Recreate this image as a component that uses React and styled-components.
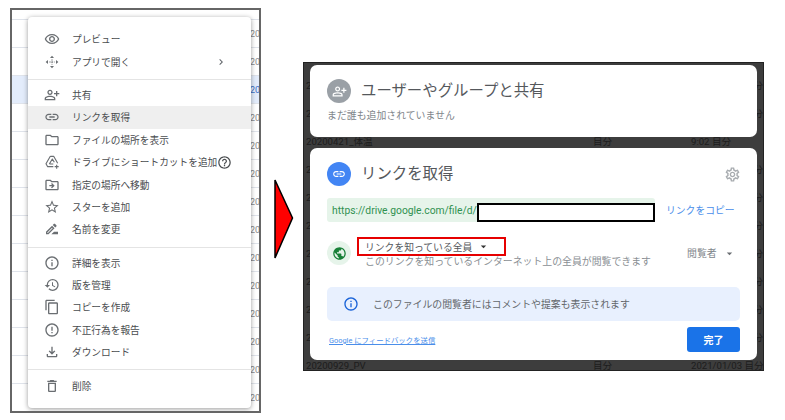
import styled, { createGlobalStyle } from "styled-components";
import {
  MdOutlineRemoveRedEye,
  MdOutlinePersonAddAlt,
  MdLink,
  MdOutlineFolder,
  MdHelpOutline,
  MdOutlineDriveFileMove,
  MdStarBorder,
  MdOutlineDriveFileRenameOutline,
  MdInfoOutline,
  MdHistory,
  MdContentCopy,
  MdErrorOutline,
  MdOutlineFileDownload,
  MdOutlineDelete,
  MdChevronRight,
  MdPublic,
  MdOutlineSettings,
  MdArrowDropDown,
} from "react-icons/md";

const GlobalStyle = createGlobalStyle`
  html, body {
    margin: 0;
    padding: 0;
    background: #fff;
  }
  body {
    font-family: Roboto, "Noto Sans CJK JP", sans-serif;
  }
`;

const Page = styled.div`
  display: flex;
  align-items: flex-start;
  width: 785px;
  height: 420px;
  padding: 8px 0 0 10px;
  box-sizing: border-box;
  overflow: hidden;
`;

/* left screenshot: file list with a context menu on top */
const ListFrame = styled.div`
  position: relative;
  width: 251px;
  height: 405px;
  box-sizing: border-box;
  border: 2px solid #666;
  overflow: hidden;
`;

const ListRow = styled.div`
  display: flex;
  align-items: center;
  height: ${(p) => (p.$short ? "10px" : "28px")};
  box-sizing: border-box;
  padding-left: 238px;
  border-bottom: 1px solid #dfe3ea;
  background: ${(p) => (p.$selected ? "#e3ecfb" : "#fff")};
  color: ${(p) => (p.$selected ? "#3b6fc4" : "#8a8a8a")};
  font-size: 9px;
  white-space: nowrap;
`;

const Menu = styled.div`
  position: absolute;
  left: 16px;
  top: 7px;
  width: 223px;
  height: 391px;
  box-sizing: border-box;
  padding-top: 11px;
  background: #fff;
  border-radius: 4px;
  box-shadow: 0 1px 5px rgba(0, 0, 0, 0.4);
`;

const MenuItem = styled.div`
  display: flex;
  align-items: center;
  gap: 12px;
  height: 22.4px;
  padding: 0 24px 0 16px;
  background: ${(p) => (p.$active ? "#efefef" : "transparent")};
  color: #4a4d50;
  font-size: 9.7px;
  white-space: nowrap;
`;

const MenuIcon = styled.span`
  display: flex;
  justify-content: center;
  width: 16px;
  font-size: 16px;
  color: #6a6e72;
`;

const Chevron = styled.span`
  display: flex;
  margin-left: auto;
  font-size: 12px;
  color: #5f6368;
`;

const HelpMark = styled.span`
  display: flex;
  margin-left: -12px;
  font-size: 15px;
  color: #4a4d50;
`;

const MenuDivider = styled.div`
  height: 1px;
  margin: 6px 0 4px;
  background: #e4e4e4;
`;

const ArrowMark = styled.svg`
  flex: none;
  width: 20px;
  height: 80px;
  margin: 171px 9px 0 13px;
`;

/* right screenshot: share dialog over a dimmed list */
const DialogFrame = styled.div`
  position: relative;
  flex: none;
  display: flex;
  flex-direction: column;
  gap: 11px;
  width: 461px;
  height: 309px;
  margin-top: 54px;
  box-sizing: border-box;
  padding: 2px 6px 0;
  background: #3d3d3d;
  border: 1px solid #222;
  overflow: hidden;
`;

const Backdrop = styled.div`
  position: absolute;
  inset: 0;
`;

const BackdropRow = styled.div`
  display: grid;
  grid-template-columns: 287px 98px 1fr;
  align-items: center;
  height: ${(p) => (p.$short ? "8px" : "28px")};
  padding-left: 2px;
  color: #1c1c1c;
  font-size: 9.6px;
  white-space: nowrap;
`;

const BackdropEnd = styled.span`
  text-align: ${(p) => (p.$edge ? "right" : "left")};
`;

const Card = styled.div`
  position: relative;
  flex: none;
  height: ${(p) => p.$height}px;
  box-sizing: border-box;
  padding: 14px 17px 0;
  background: #fff;
  border-radius: 7px;
`;

const CardHeader = styled.div`
  display: flex;
  align-items: center;
  gap: 10px;
`;

const Avatar = styled.div`
  flex: none;
  display: flex;
  align-items: center;
  justify-content: center;
  width: 24px;
  height: 24px;
  border-radius: 50%;
  background: ${(p) => p.$bg};
  color: ${(p) => p.$fg};
  font-size: ${(p) => p.$size}px;
`;

const CardTitle = styled.div`
  font-size: 15.4px;
  line-height: 20px;
  color: #55585c;
`;

const Hint = styled.div`
  margin-top: 7px;
  font-size: 9.9px;
  line-height: 12px;
  color: #80868b;
`;

const Gear = styled.span`
  display: flex;
  margin: 0 -1px 0 auto;
  font-size: 17px;
  color: #a8acb0;
`;

const LinkRow = styled.div`
  display: flex;
  align-items: center;
  gap: 12px;
  margin-top: 12px;
`;

const LinkField = styled.div`
  display: flex;
  align-items: center;
  width: 328px;
  height: 24px;
  box-sizing: border-box;
  padding-left: 5px;
  background: #e6f4ea;
  border-radius: 3px;
  color: #2f9150;
  font-size: 10.3px;
  white-space: nowrap;
`;

const Redaction = styled.div`
  flex: 1;
  align-self: flex-end;
  height: 19px;
  box-sizing: border-box;
  background: #fff;
  border: 2px solid #000;
`;

const CopyLink = styled.div`
  margin-left: -1px;
  color: #4a8eea;
  font-size: 9.8px;
  white-space: nowrap;
`;

const AccessRow = styled.div`
  display: flex;
  align-items: flex-start;
  gap: 6px;
  height: 28px;
  margin-top: 15px;
`;

const GlobeWrap = styled.div`
  margin-top: 4px;
`;

const AccessText = styled.div`
  display: flex;
  flex-direction: column;
`;

const AccessSelect = styled.div`
  display: flex;
  align-items: center;
  width: 149px;
  height: 19px;
  box-sizing: border-box;
  padding-left: 6px;
  border: 2px solid #e60000;
  color: #55585c;
  font-size: 9.8px;
  white-space: nowrap;
`;

const Caret = styled.span`
  display: flex;
  margin-left: ${(p) => p.$gap}px;
  font-size: 13px;
  color: ${(p) => p.$color};
`;

const AccessHint = styled.div`
  margin-left: 8px;
  font-size: 9.9px;
  line-height: 11px;
  color: #8a8f94;
  white-space: nowrap;
`;

const Role = styled.div`
  display: flex;
  align-items: center;
  margin: 10px 0 0 auto;
  width: 53px;
  color: #80868b;
  font-size: 9.9px;
  line-height: 12px;
`;

const Notice = styled.div`
  display: flex;
  align-items: center;
  gap: 14px;
  height: 34px;
  margin-top: 22px;
  padding-left: 16px;
  background: #e8f0fe;
  border-radius: 5px;
  color: #63676b;
  font-size: 9.9px;
`;

const NoticeIcon = styled.span`
  display: flex;
  font-size: 16px;
  color: #1a63d8;
`;

const Footer = styled.div`
  display: flex;
  align-items: center;
  justify-content: space-between;
  margin-top: 6px;
`;

const Feedback = styled.div`
  margin-left: 2px;
  color: #4a8eea;
  font-size: 7.4px;
  text-decoration: underline;
`;

const DoneButton = styled.div`
  display: flex;
  align-items: center;
  justify-content: center;
  width: 53px;
  height: 25px;
  background: #1a73e8;
  border-radius: 3px;
  color: #fff;
  font-size: 10px;
  font-weight: 700;
`;

// four small arrow heads joined by a thin cross
const OpenWithIcon = () => (
  <svg width="1em" height="1em" viewBox="0 0 24 24" fill="currentColor">
    <path d="M12 2.5 15 6H9zM12 21.5 9 18h6zM2.5 12 6 9v6zM21.5 12 18 15V9z" />
    <path d="M12 8v8M8 12h8" stroke="currentColor" strokeWidth="1.4" strokeDasharray="2 1.4" fill="none" />
  </svg>
);

// drive triangle outline with a plus at the lower right
const DriveShortcutIcon = () => (
  <svg width="1em" height="1em" viewBox="0 0 24 24" fill="none" stroke="currentColor" strokeWidth="1.7">
    <path d="M9.5 3.5h5l6 10.5M9.5 3.5 3 14.5l2.5 4.5H14M8 15l4.5-7.5 3 5M8 15h6" strokeLinejoin="round" />
    <path d="M19 16v6M16 19h6" />
  </svg>
);

const listRows = Array.from({ length: 14 }, (_, i) => i);

const menuGroups = [
  [
    { icon: <MdOutlineRemoveRedEye />, label: "プレビュー" },
    { icon: <OpenWithIcon />, label: "アプリで開く", chevron: true },
  ],
  [
    { icon: <MdOutlinePersonAddAlt />, label: "共有" },
    { icon: <MdLink />, label: "リンクを取得", active: true },
    { icon: <MdOutlineFolder />, label: "ファイルの場所を表示" },
    { icon: <DriveShortcutIcon />, label: "ドライブにショートカットを追加", help: true },
    { icon: <MdOutlineDriveFileMove />, label: "指定の場所へ移動" },
    { icon: <MdStarBorder />, label: "スターを追加" },
    { icon: <MdOutlineDriveFileRenameOutline />, label: "名前を変更" },
  ],
  [
    { icon: <MdInfoOutline />, label: "詳細を表示" },
    { icon: <MdHistory />, label: "版を管理" },
    { icon: <MdContentCopy />, label: "コピーを作成" },
    { icon: <MdErrorOutline />, label: "不正行為を報告" },
    { icon: <MdOutlineFileDownload />, label: "ダウンロード" },
  ],
  [{ icon: <MdOutlineDelete />, label: "削除" }],
];

// rows behind the cards only show a sliver at the frame edges
const edgeRow = { name: "2", middle: "", end: "分", edge: true };
const backdropRows = [
  { name: "", middle: "", end: "" },
  edgeRow,
  edgeRow,
  { name: "20200421_体温", middle: "目分", end: "9:02 目分" },
  edgeRow,
  edgeRow,
  edgeRow,
  edgeRow,
  edgeRow,
  edgeRow,
  edgeRow,
  { name: "20200929_PV", middle: "目分", end: "2021/01/03 目分" },
];

function App() {
  return (
    <Page>
      <GlobalStyle />
      <ListFrame>
        <ListRow $short />
        {listRows.map((i) => (
          <ListRow key={i} $selected={i === 2}>
            20
          </ListRow>
        ))}
        <Menu>
          {menuGroups.map((group, g) => (
            <div key={g}>
              {g > 0 && <MenuDivider />}
              {group.map((item) => (
                <MenuItem key={item.label} $active={item.active}>
                  <MenuIcon>{item.icon}</MenuIcon>
                  <span>{item.label}</span>
                  {item.help && (
                    <HelpMark>
                      <MdHelpOutline />
                    </HelpMark>
                  )}
                  {item.chevron && (
                    <Chevron>
                      <MdChevronRight />
                    </Chevron>
                  )}
                </MenuItem>
              ))}
            </div>
          ))}
        </Menu>
      </ListFrame>

      <ArrowMark viewBox="0 0 20 80">
        <polygon points="1,1 18.5,39 1,79" fill="#ff0000" stroke="#000" strokeWidth="1.5" />
      </ArrowMark>

      <DialogFrame>
        <Backdrop>
          {backdropRows.map((row, i) => (
            <BackdropRow key={i} $short={i === 0}>
              <span>{row.name}</span>
              <span>{row.middle}</span>
              <BackdropEnd $edge={row.edge}>{row.end}</BackdropEnd>
            </BackdropRow>
          ))}
        </Backdrop>

        <Card $height={72}>
          <CardHeader>
            <Avatar $bg="#9aa0a6" $fg="#fff" $size={15}>
              <MdOutlinePersonAddAlt />
            </Avatar>
            <CardTitle>ユーザーやグループと共有</CardTitle>
          </CardHeader>
          <Hint>まだ誰も追加されていません</Hint>
        </Card>

        <Card $height={212}>
          <CardHeader>
            <Avatar $bg="#4285f4" $fg="#fff" $size={14}>
              <MdLink />
            </Avatar>
            <CardTitle>リンクを取得</CardTitle>
            <Gear>
              <MdOutlineSettings />
            </Gear>
          </CardHeader>

          <LinkRow>
            <LinkField>
              https://drive.google.com/file/d/
              <Redaction />
            </LinkField>
            <CopyLink>リンクをコピー</CopyLink>
          </LinkRow>

          <AccessRow>
            <GlobeWrap>
              <Avatar $bg="#e6f4ea" $fg="#188038" $size={15}>
                <MdPublic />
              </Avatar>
            </GlobeWrap>
            <AccessText>
              <AccessSelect>
                リンクを知っている全員
                <Caret $gap={5} $color="#333">
                  <MdArrowDropDown />
                </Caret>
              </AccessSelect>
              <AccessHint>このリンクを知っているインターネット上の全員が閲覧できます</AccessHint>
            </AccessText>
            <Role>
              閲覧者
              <Caret $gap={6} $color="#6a6e73">
                <MdArrowDropDown />
              </Caret>
            </Role>
          </AccessRow>

          <Notice>
            <NoticeIcon>
              <MdInfoOutline />
            </NoticeIcon>
            このファイルの閲覧者にはコメントや提案も表示されます
          </Notice>

          <Footer>
            <Feedback>Google にフィードバックを送信</Feedback>
            <DoneButton>完了</DoneButton>
          </Footer>
        </Card>
      </DialogFrame>
    </Page>
  );
}

export default App;
